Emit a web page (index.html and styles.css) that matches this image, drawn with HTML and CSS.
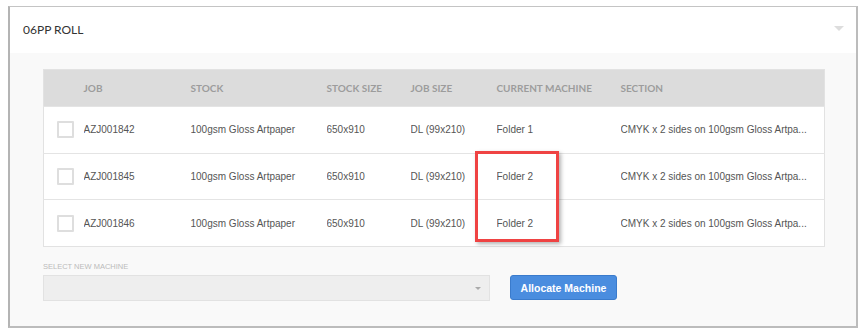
FILE: index.html
```html
<!DOCTYPE html>
<html lang="en">
<head>
<meta charset="UTF-8">
<meta name="viewport" content="width=device-width, initial-scale=1.0">
<title>06PP Roll</title>
<link rel="stylesheet" href="styles.css">
</head>
<body>
<div class="panel">
  <div class="panel-head">
    <span class="panel-title">06PP ROLL</span>
    <span class="caret"></span>
  </div>
  <div class="panel-body">
    <div class="table-wrap">
      <table class="jobs">
        <colgroup>
          <col class="c-check">
          <col class="c-job">
          <col class="c-stock">
          <col class="c-ssize">
          <col class="c-jsize">
          <col class="c-mach">
          <col class="c-sect">
        </colgroup>
        <tr>
          <th></th>
          <th>Job</th>
          <th>Stock</th>
          <th>Stock Size</th>
          <th>Job Size</th>
          <th>Current Machine</th>
          <th>Section</th>
        </tr>
        <tr>
          <td><span class="check"></span></td>
          <td>AZJ001842</td>
          <td>100gsm Gloss Artpaper</td>
          <td>650x910</td>
          <td>DL (99x210)</td>
          <td>Folder 1</td>
          <td>CMYK x 2 sides on 100gsm Gloss Artpa...</td>
        </tr>
        <tr>
          <td><span class="check"></span></td>
          <td>AZJ001845</td>
          <td>100gsm Gloss Artpaper</td>
          <td>650x910</td>
          <td>DL (99x210)</td>
          <td>Folder 2</td>
          <td>CMYK x 2 sides on 100gsm Gloss Artpa...</td>
        </tr>
        <tr>
          <td><span class="check"></span></td>
          <td>AZJ001846</td>
          <td>100gsm Gloss Artpaper</td>
          <td>650x910</td>
          <td>DL (99x210)</td>
          <td>Folder 2</td>
          <td>CMYK x 2 sides on 100gsm Gloss Artpa...</td>
        </tr>
      </table>
      <!-- annotation over the changed machines -->
      <div class="highlight"></div>
    </div>

    <div class="allocate">
      <div class="field">
        <label class="field-label">SELECT NEW MACHINE</label>
        <div class="select"><span class="select-caret"></span></div>
      </div>
      <button class="btn">Allocate Machine</button>
    </div>
  </div>
</div>
</body>
</html>
```

FILE: styles.css
```css
body {
    margin: 0;
    padding: 0;
    background: #fff;
    font-family: "Liberation Sans", Arial, sans-serif;
}
.panel {
    margin: 6px 6px 4px 8px;
    height: 322px;
    border: 1px solid #c4c4c4;
    border-left: 2px solid #b4b4b4;
    border-bottom: 2px solid #bcbcbc;
    border-right: 2px solid #bcbcbc;
    background: #f9f9f9;
    box-sizing: border-box;
}
.panel-head {
    height: 46px;
    background: #fff;
    display: flex;
    align-items: center;
    justify-content: space-between;
    padding: 0 12px 0 13px;
}
.panel-title {
    font-family: Lato, sans-serif;
    font-size: 12px;
    color: #333;
    margin-top: -2px;
}
.caret {
    width: 0;
    height: 0;
    border-left: 5px solid transparent;
    border-right: 5px solid transparent;
    border-top: 5px solid #ddd;
    margin-top: -4px;
}
.panel-body {
    padding: 16px 32px 0 33px;
}
.table-wrap {
    position: relative;
}
.jobs {
    width: 781px;
    border-collapse: collapse;
    table-layout: fixed;
    background: #fff;
    border: 1px solid #e2e2e2;
}
.c-check { width: 40px; }
.c-job { width: 107px; }
.c-stock { width: 136px; }
.c-ssize { width: 84px; }
.c-jsize { width: 86px; }
.c-mach { width: 124px; }
.c-sect { width: 204px; }
.jobs th {
    background: #dcdcdc;
    height: 36px;
    padding: 0;
    text-align: left;
    font-family: Lato, sans-serif;
    font-weight: bold;
    font-size: 10px;
    color: #9c9c9c;
    text-transform: uppercase;
}
.jobs td {
    height: 45.7px;
    padding: 0;
    font-size: 10px;
    color: #555;
    border-top: 1px solid #e4e4e4;
    white-space: nowrap;
    overflow: hidden;
}
.jobs td:first-child {
    padding-left: 13px;
}
.check {
    display: block;
    width: 13px;
    height: 13px;
    border: 2px solid #dedede;
    border-radius: 1px;
    background: #fff;
}
.highlight {
    position: absolute;
    left: 432px;
    top: 82px;
    width: 78px;
    height: 85px;
    border: 3px solid #ef4343;
    box-shadow: 2px 2px 4px rgba(0, 0, 0, 0.3);
}
.allocate {
    display: flex;
    align-items: flex-end;
    gap: 20px;
    margin-top: 15px;
}
.field-label {
    display: block;
    font-size: 7.5px;
    color: #bbb;
    margin-bottom: 4px;
}
.select {
    width: 445px;
    height: 24px;
    background: #eee;
    border: 1px solid #e2e2e2;
    position: relative;
}
.select-caret {
    position: absolute;
    right: 8px;
    top: 11px;
    width: 0;
    height: 0;
    border-left: 3px solid transparent;
    border-right: 3px solid transparent;
    border-top: 3px solid #aaa;
}
.btn {
    width: 107px;
    height: 25px;
    margin-bottom: 1px;
    background: #4a8ddf;
    border: 1px solid #3a7bcc;
    border-radius: 3px;
    color: #fff;
    font-family: "Liberation Sans", Arial, sans-serif;
    font-weight: bold;
    font-size: 10.5px;
    padding: 0;
    cursor: pointer;
}
```
